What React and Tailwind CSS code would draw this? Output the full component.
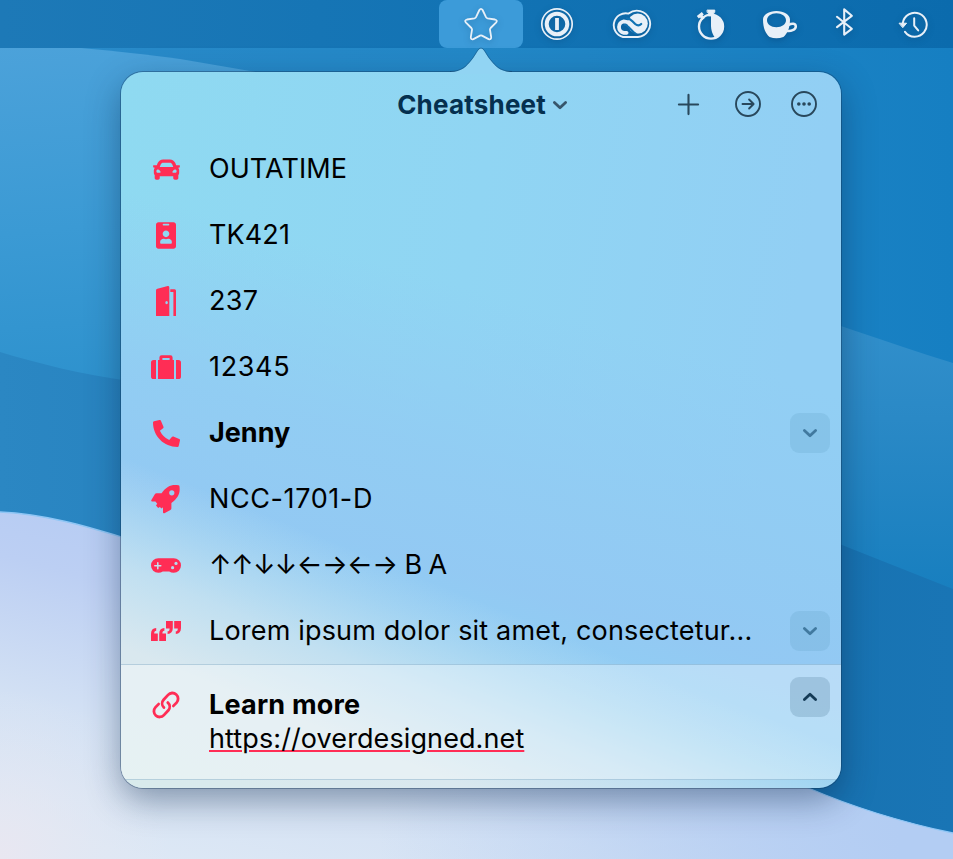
import React from "react";
import { FaCar, FaIdBadge, FaPhoneAlt } from "react-icons/fa";

const ICE = "#e8f0f8";

function Wallpaper() {
  return (
    <svg className="absolute inset-0" width="953" height="859" viewBox="0 0 953 859" preserveAspectRatio="none">
      <defs>
        <linearGradient id="sky" x1="0" x2="1" y1="0" y2="0">
          <stop offset="0" stopColor="#2a8bca" />
          <stop offset="0.5" stopColor="#2388c7" />
          <stop offset="1" stopColor="#167fc2" />
        </linearGradient>
        <linearGradient id="leftWave" x1="0" x2="0.1" y1="0" y2="1">
          <stop offset="0" stopColor="#4ca2da" />
          <stop offset="0.5" stopColor="#3b9ad4" />
          <stop offset="1" stopColor="#2b90cc" />
        </linearGradient>
        <linearGradient id="rightWave" x1="0" x2="0" y1="326" y2="590" gradientUnits="userSpaceOnUse">
          <stop offset="0" stopColor="#318fcb" />
          <stop offset="0.35" stopColor="#2a89c6" />
          <stop offset="1" stopColor="#187fbf" />
        </linearGradient>
        <linearGradient id="deep" x1="0" x2="1" y1="0" y2="0">
          <stop offset="0" stopColor="#2b87c3" />
          <stop offset="0.88" stopColor="#1873b2" />
          <stop offset="1" stopColor="#1975b5" />
        </linearGradient>
        <linearGradient id="snow" x1="330" y1="490" x2="230" y2="880" gradientUnits="userSpaceOnUse">
          <stop offset="0" stopColor="#b0c9f3" />
          <stop offset="0.36" stopColor="#bccff3" />
          <stop offset="0.7" stopColor="#d3e1f4" />
          <stop offset="1" stopColor="#dde8f5" />
        </linearGradient>
        <radialGradient id="blush" cx="0" cy="859" r="170" gradientUnits="userSpaceOnUse">
          <stop offset="0" stopColor="#e9e7f1" />
          <stop offset="1" stopColor="#e3e8f3" stopOpacity="0" />
        </radialGradient>
        <linearGradient id="lavender" x1="380" x2="900" y1="0" y2="0" gradientUnits="userSpaceOnUse">
          <stop offset="0" stopColor="#b3cdf2" stopOpacity="0" />
          <stop offset="1" stopColor="#b3cdf3" />
        </linearGradient>
      </defs>
      <rect width="953" height="859" fill="url(#sky)" />
      <path d="M0 44C60 45 110 50 180 59L420 100V420H0Z" fill="url(#leftWave)" />
      <path d="M700 284C780 302 860 334 953 363V600H700Z" fill="url(#rightWave)" />
      <path d="M0 352C40 364 80 374 130 381C350 400 620 450 842 545L953 589V859H0Z" fill="url(#deep)" />
      <path d="M0 512C45 514 85 526 125 538C360 600 580 690 806 787C850 806 900 822 953 833V859H0Z" fill="url(#snow)" />
      <path d="M700 740L806 787C850 806 900 822 953 833V859H380V740Z" fill="url(#lavender)" />
      <rect y="689" width="170" height="170" fill="url(#blush)" />
      <path d="M0 512C45 514 85 526 125 538M806 787C850 806 900 822 953 833" fill="none" stroke="#8fc6f5" strokeWidth="1.3" />
    </svg>
  );
}

function MenuIcon({ cx, children }) {
  return (
    <svg
      width="48"
      height="48"
      viewBox={`${cx - 24} 0 48 48`}
      fill="none"
      stroke={ICE}
      strokeLinecap="round"
      strokeLinejoin="round"
      className="block drop-shadow-[0_2px_3px_rgba(0,30,70,0.25)]"
    >
      {children}
    </svg>
  );
}

function MenuBar() {
  return (
    <header className="relative flex h-12 justify-end bg-linear-to-r from-[#1d79b7] via-[#1273b4] to-[#0b6bad] pr-0.5">
      <div className="flex w-21 justify-center rounded-lg bg-[#3c9bd9]">
        <MenuIcon cx={481}>
          <path
            strokeWidth="1.8"
            d="M479.4 10Q481 7.6 482.6 10L486 17.2Q486.5 18.2 487.6 18.4L495 19.5Q498 20.3 496 22.6L490.6 28Q489.9 28.8 490 29.8L491.2 37.2Q491.2 40 488.6 39.1L482 35.6Q481 35.1 480 35.6L473.4 39.1Q470.8 40 470.8 37.2L472 29.8Q472.1 28.8 471.4 28L466 22.6Q464 20.3 467 19.5L474.4 18.4Q475.5 18.2 476 17.2Z"
          />
        </MenuIcon>
      </div>
      <div className="flex w-17 justify-center">
        <MenuIcon cx={557}>
          <circle cx="557" cy="24" r="15.2" strokeWidth="1.7" />
          <circle cx="557" cy="24" r="10.3" strokeWidth="4" />
          <path d="M557 18V30" strokeWidth="3.8" strokeLinecap="butt" />
        </MenuIcon>
      </div>
      <div className="flex w-21 justify-center">
        <MenuIcon cx={633}>
          <circle cx="637.8" cy="23.6" r="10" fill={ICE} stroke="none" />
          <path
            stroke="#1072b3"
            strokeWidth="2.2"
            d="M627 18.4Q630 18.8 632.4 21.2L635.2 24Q638.4 26.8 641.2 24"
          />
          <path
            stroke="#1072b3"
            strokeWidth="2"
            strokeLinecap="butt"
            d="M624 24.6Q626.4 24.6 628.4 26.8L633.8 32.2Q635 33.6 636.6 33.8"
          />
          <path
            strokeWidth="3.8"
            d="M626.6 32.8Q625 33 623.8 32.9A5.9 5.9 0 0 1 623.8 21.3Q627.2 21.3 629.8 23.8L636.4 30.4Q637.4 31.4 639 31.4"
          />
          <path
            strokeWidth="1.9"
            d="M628.6 13.6A13.2 13.2 0 1 1 638 37H623A10.6 10.6 0 1 1 628.6 13.6"
          />
        </MenuIcon>
      </div>
      <div className="flex w-18 justify-center">
        <MenuIcon cx={711}>
          <circle cx="711" cy="26.6" r="12" strokeWidth="2.4" />
          <path d="M711 15A11.6 11.6 0 0 1 715 37.8Q711.2 33 711 26Z" fill={ICE} stroke="none" />
          <path d="M707.4 10H714.8V12.4H713.8V16H708.4V12.4H707.4Z" fill={ICE} strokeWidth="0.8" />
          <path d="M697.8 17.2L702.8 13.2M700.4 15.4L703.6 19" strokeWidth="3.2" strokeLinecap="butt" />
        </MenuIcon>
      </div>
      <div className="flex w-16 justify-center">
        <MenuIcon cx={779}>
          <path
            fill={ICE}
            stroke="none"
            fillRule="evenodd"
            d="M776.4 11C784 11 790 14.6 790 19.6C790 28 787.4 34 783.4 37Q776.4 39.4 769.6 37C765.6 34 763 28 763 19.6C763 14.6 768.8 11 776.4 11ZM776.4 13.2C771 13.2 767 16.2 767 20.2C767 24.2 771 27.2 776.4 27.2C781.8 27.2 786 24.2 786 20.2C786 16.2 781.8 13.2 776.4 13.2Z"
          />
          <path strokeWidth="2.5" d="M788.6 24.8C792 23 795.8 23.2 795.8 26.4C795.8 29.8 790.6 31.6 786.8 30.8" />
        </MenuIcon>
      </div>
      <div className="flex w-16.5 justify-center">
        <MenuIcon cx={844}>
          <path strokeWidth="2.1" d="M837 16.8L851.8 28.8L844.2 34.6V9.4L851.8 15.8L837 27.2" />
        </MenuIcon>
      </div>
      <div className="flex w-18.5 justify-center">
        <MenuIcon cx={914}>
          <path strokeWidth="2" d="M902.8 23.2A12 12 0 1 1 905 31.8" />
          <path d="M899.4 23.2H906.6L903 27.4Z" fill={ICE} strokeWidth="1" />
          <path strokeWidth="2" d="M914.2 18.2V25.6L918.2 30.4" />
        </MenuIcon>
      </div>
    </header>
  );
}

function DoorIcon() {
  return (
    <svg width="30" height="30" viewBox="0 0 30 30" fill="currentColor">
      <path
        fillRule="evenodd"
        d="M5 4.4Q5 3 6.4 2.7L16.8 0.1Q18.3 0 18.3 1.5V30H5ZM15.6 15A1.3 1.6 0 1 0 15.6 18.2A1.3 1.6 0 1 0 15.6 15Z"
      />
      <path d="M19.3 3.3H23.6Q25 3.4 25 4.8V30H22.4V5.9H19.3Z" />
    </svg>
  );
}

function SuitcaseIcon() {
  return (
    <svg width="30" height="24" viewBox="0 0 30 24" fill="currentColor">
      <path d="M5 5V24H2.6Q0 24 0 21.4V7.6Q0 5 2.6 5ZM25 5V24H27.4Q30 24 30 21.4V7.6Q30 5 27.4 5Z" />
      <path
        fillRule="evenodd"
        d="M7 24V5H8.4V2.4Q8.4 0.3 10.6 0.3H19.4Q21.6 0.3 21.6 2.4V5H23V24ZM11.4 5H18.6V3H11.4Z"
      />
    </svg>
  );
}

function RocketIcon() {
  return (
    <svg width="30" height="30" viewBox="0 0 30 30" fill="currentColor">
      <path
        fillRule="evenodd"
        d="M27.4 1.2C28 1.3 28.3 1.6 28.4 2.1C29.6 9.4 26.8 14.2 20.4 19V24.2Q20.4 25.4 19.4 26L13.4 29.2Q12 29.7 12 28.2V23.2L10.6 24.6L8.8 23L7.2 24L5 21.4L6.2 19.8L4.4 17.6H1.2Q-0.3 17.4 0.4 16L3.8 10.2Q4.4 9.2 5.6 9.2H10.6C15.4 2.2 20.6 0 27.4 1.2ZM20.8 6.2A2.6 2.6 0 1 0 20.8 11.4A2.6 2.6 0 1 0 20.8 6.2Z"
      />
    </svg>
  );
}

function GamepadIcon() {
  return (
    <svg width="30" height="15" viewBox="0 0 30 15">
      <path
        fill="currentColor"
        d="M7.3 0.2H22.7A7.25 7.25 0 0 1 22.7 14.8Q20.2 14.8 18.2 13.6H11.8Q9.8 14.8 7.3 14.8A7.25 7.25 0 0 1 7.3 0.2Z"
      />
      <path d="M3.8 7.7H9.8M6.8 4.7V10.7" stroke="#c4e2f1" strokeWidth="1.5" strokeLinecap="round" />
      <circle cx="21.6" cy="9.7" r="1.6" fill="#b5dbef" />
      <circle cx="25" cy="5.4" r="1.6" fill="#b5dbef" />
    </svg>
  );
}

function QuotesIcon() {
  const closing = "M0 0H6.8V7C6.8 10.8 5 12.8 1.6 12.9V10.3C3 10.2 3.6 9.4 3.6 7.4H0Z";
  return (
    <svg width="30" height="20" viewBox="0 0 30 20" fill="currentColor">
      <path d={closing} transform="translate(15 0)" />
      <path d={closing} transform="translate(23.2 0)" />
      <path d={closing} transform="translate(6.8 20) rotate(180)" />
      <path d={closing} transform="translate(15 20) rotate(180)" />
    </svg>
  );
}

function LinkIcon() {
  return (
    <svg width="30" height="30" viewBox="0 0 30 30" fill="none" stroke="currentColor" strokeWidth="2.8" strokeLinecap="round">
      <path d="M12.9 17.5A5.6 5.6 0 0 1 12.6 9.7L17.1 4.9A5.6 5.6 0 0 1 25.6 12.6L22.4 15.9" />
      <path d="M16.8 12.6A5.6 5.6 0 0 1 17.4 20.3L12.9 25.1A5.6 5.6 0 0 1 4.4 17.4L7.6 14.1" />
    </svg>
  );
}

function Chevron({ up = false, color }) {
  return (
    <svg width="16" height="12" viewBox="0 0 16 12" fill="none" stroke={color} strokeWidth="2.8" strokeLinecap="round" strokeLinejoin="round">
      <path d={up ? "M2.4 8.6L8 3.2L13.6 8.6" : "M2.4 3.4L8 8.8L13.6 3.4"} />
    </svg>
  );
}

const rows = [
  { icon: <FaCar className="h-[27px] w-[27px]" />, text: "OUTATIME", track: "tracking-[0.06px]" },
  { icon: <FaIdBadge className="h-[27px] w-5" />, text: "TK421", track: "tracking-[0.1px]" },
  { icon: <DoorIcon />, text: "237", track: "tracking-[0.3px]" },
  { icon: <SuitcaseIcon />, text: "12345", track: "tracking-[0.65px]" },
  { icon: <FaPhoneAlt className="h-[27px] w-[27px]" />, text: "Jenny", bold: true, more: true, track: "tracking-[0px]" },
  { icon: <RocketIcon />, text: "NCC-1701-D", track: "tracking-[0.6px]" },
  { icon: <GamepadIcon />, text: "↑↑↓↓←→←→ B A", track: "tracking-[-0.58px]" },
  { icon: <QuotesIcon />, text: "Lorem ipsum dolor sit amet, consectetur...", more: true, track: "tracking-[0.18px]" },
];

function Popover() {
  return (
    <main className="relative ml-[121px] mt-6 h-[716px] w-[720px]">
      <div className="flex h-full flex-col overflow-hidden rounded-[22px] bg-[linear-gradient(202deg,transparent_67%,rgba(219,232,240,0.22)_71%,rgba(219,232,240,0.65)_78%,#d9e8ef_86%,#d9ebec_100%),linear-gradient(196deg,transparent_35%,rgba(146,203,243,0.85)_54%,rgba(147,200,243,0.9)_66%,rgba(143,208,243,1)_78%),linear-gradient(100deg,#8fdaf1_0%,#90d5f3_45%,#92cff4_85%)] shadow-[0_0_0_1px_rgba(15,50,85,0.38),0_12px_34px_rgba(10,35,70,0.42)]">
        <div className="flex h-[63px] shrink-0 items-center pr-[23px] pt-0.5">
          <div className="flex flex-1 items-center justify-end gap-[6px] pr-[109px] text-[#05304f]">
            <h1 className="text-[26px] font-bold tracking-[0.2px]">Cheatsheet</h1>
            <Chevron color="#37566b" />
          </div>
          <div className="flex items-center text-[#29485c]">
            <svg width="24" height="26" viewBox="0 0 24 26" stroke="currentColor" strokeWidth="2.1" strokeLinecap="round">
              <path d="M1.9 12.5H21.1M11.5 2.9V22.1" />
            </svg>
            <svg className="ml-[34px]" width="27" height="27" viewBox="0 0 27 27" fill="none" stroke="currentColor" strokeWidth="1.9" strokeLinecap="round" strokeLinejoin="round">
              <circle cx="13" cy="13" r="12" />
              <path d="M7.5 13H18.5M14.1 8.5L18.6 13L14.1 17.5" />
            </svg>
            <svg className="ml-[29px]" width="27" height="27" viewBox="0 0 27 27" fill="none" stroke="currentColor" strokeWidth="1.9">
              <circle cx="13" cy="13" r="12" />
              <g fill="currentColor" stroke="none">
                <circle cx="7.8" cy="13" r="1.8" />
                <circle cx="13" cy="13" r="1.8" />
                <circle cx="18.2" cy="13" r="1.8" />
              </g>
            </svg>
          </div>
        </div>
        <ul className="text-[27px] text-black">
          {rows.map((r) => (
            <li key={r.text} className="flex h-[66px] items-center pl-[30px] pr-[11px]">
              <span className="mt-0.5 flex w-[30px] justify-center text-[#ff2d55]">{r.icon}</span>
              <span className={`ml-7 mt-0.5 flex-1 whitespace-nowrap ${r.track} ${r.bold ? "font-bold" : ""}`}>{r.text}</span>
              {r.more && (
                <button className="mt-0.5 flex h-10 w-10 items-center justify-center rounded-[9px] bg-[#5b9bc0]/20">
                  <Chevron color="#41799f" />
                </button>
              )}
            </li>
          ))}
        </ul>
        <section className="mt-px flex h-[116px] shrink-0 items-start border-y border-[#4682aa]/30 bg-white/35 pl-[30px] pr-[11px] text-[27px] text-black">
          <span className="mt-[25px] flex w-[30px] justify-center text-[#ff2d55]">
            <LinkIcon />
          </span>
          <div className="ml-7 mt-[23px] flex-1 leading-[34px]">
            <div className="font-bold tracking-[0.2px]">Learn more</div>
            <a className="tracking-[0.1px] underline decoration-[#ff2d55] decoration-2 underline-offset-2">https://overdesigned.net</a>
          </div>
          <button className="mt-3 flex h-10 w-10 items-center justify-center rounded-[9px] bg-[#5f8ca8]/30">
            <Chevron up color="#143a55" />
          </button>
        </section>
      </div>
      <svg className="absolute left-[329px] top-[-25px]" width="62" height="27" viewBox="0 0 62 27">
        <path d="M0 27V25C12 24.6 16 20 22 12.5C26 7.5 28 1.4 31 1.4C34 1.4 36 7.5 40 12.5C46 20 50 24.6 62 25V27Z" fill="#91d4f3" />
        <path d="M0 24.5C12 24.1 16 19.5 22 12C26 7 28 1 31 1C34 1 36 7 40 12C46 19.5 50 24.1 62 24.5" fill="none" stroke="#0f3255" strokeOpacity="0.35" />
      </svg>
    </main>
  );
}

export default function App() {
  return (
    <div className="relative h-[859px] w-[953px] overflow-hidden font-['Inter','Liberation_Sans',sans-serif]">
      <Wallpaper />
      <MenuBar />
      <Popover />
    </div>
  );
}
